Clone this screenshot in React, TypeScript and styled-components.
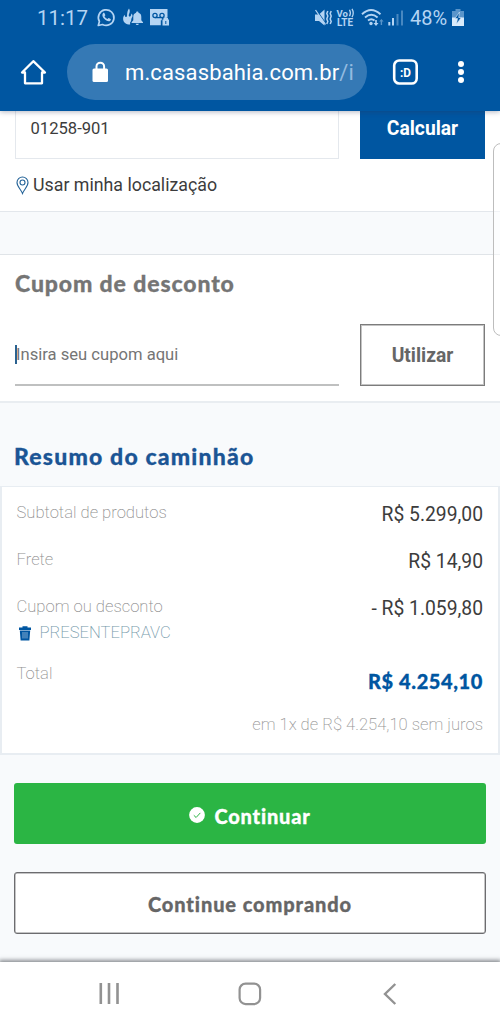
import React from "react";
import styled, { createGlobalStyle } from "styled-components";

const Global = createGlobalStyle`
  * { box-sizing: border-box; }
  body { margin: 0; background: #f8fafc; font-family: Roboto, "Liberation Sans", sans-serif; }
  button { font: inherit; padding: 0; margin: 0; border: 0; background: none; }
`;

const BLUE = "#0056a1";
const PALE = "#b4d4f3";

const Screen = styled.div`
  position: relative;
  display: flex;
  flex-direction: column;
  width: 500px;
  height: 1028px;
  overflow: hidden;
  background: #f8fafc;
`;

const Label = styled.span<{ $size: number; $track?: number; $weight?: number; $color?: string }>`
  font-size: ${(p) => p.$size}px;
  letter-spacing: ${(p) => p.$track ?? 0}px;
  font-weight: ${(p) => p.$weight ?? 400};
  color: ${(p) => p.$color ?? "#3c3c3c"};
  line-height: 24px;
  white-space: nowrap;
`;

const Display = styled(Label)`
  font-family: Lato, "Open Sans", sans-serif;
  font-weight: 900;
  -webkit-text-stroke: 0.3px currentColor;
`;

const Header = styled.header`
  position: relative;
  z-index: 2;
  flex: none;
  height: 111px;
  background: ${BLUE};
  box-shadow: 0 1px 5px rgba(40, 50, 80, 0.35);
`;

const StatusBar = styled.div`
  display: flex;
  align-items: center;
  height: 36px;
  padding: 0 35px 0 37px;
`;

const StatusIcons = styled.div<{ $left: number }>`
  display: flex;
  margin-left: ${(p) => p.$left}px;
`;

const BatteryIcon = styled.svg`
  margin: 2px 0 0 4px;
`;

const Toolbar = styled.div`
  display: flex;
  align-items: center;
  height: 72px;
  padding-left: 20px;
`;

const UrlPill = styled.div`
  display: flex;
  align-items: center;
  width: 300px;
  height: 56px;
  margin: 0 25px 0 20px;
  padding-left: 25px;
  border-radius: 28px;
  background: #3579b5;
`;

const Url = styled(Label)`
  margin: 2px 0 0 16px;
  span { color: #93bbe0; }
`;

const Dots = styled.svg`
  margin-left: 38px;
`;

const Delivery = styled.section`
  flex: none;
  height: 101px;
  padding: 0 15px;
  background: #fff;
  border-bottom: 1px solid #e3e7ec;
`;

const FieldRow = styled.div`
  display: flex;
  justify-content: space-between;
  align-items: flex-start;
`;

const ZipField = styled.div`
  width: 324px;
  height: 48px;
  padding: 6px 14.5px;
  border: 1px solid #e4e8ed;
  border-top: 0;
`;

const Calculate = styled.button`
  width: 125px;
  height: 48px;
  padding-bottom: 12px;
  background: ${BLUE};
`;

const LocationLink = styled.div`
  display: flex;
  align-items: center;
  margin-top: 14px;
  padding-left: 1px;
  gap: 4px;
`;

const Coupon = styled.section`
  flex: none;
  height: 149px;
  margin-top: 42px;
  padding: 16px 15px 0;
  background: #fff;
  border-top: 1px solid #e0e4e8;
  border-bottom: 2px solid #e9edf1;
`;

const Heading = styled(Display).attrs({ as: "h2" })`
  margin: 0;
`;

const CouponRow = styled(FieldRow)`
  margin-top: 29px;
`;

const CouponField = styled.div`
  display: flex;
  align-items: center;
  width: 324px;
  height: 62px;
  padding-top: 1px;
  border-bottom: 2px solid #bfc0c0;
`;

const Caret = styled.i`
  width: 2px;
  height: 19px;
  margin-right: -1px;
  background: #2b6290;
`;

const Apply = styled.button`
  width: 125px;
  height: 62px;
  padding-top: 1px;
  border: 1px solid #7c7c7c;
  box-shadow: inset 0 0 0 1px #c4c4c4;
`;

const SummaryTitle = styled.div`
  flex: none;
  height: 83px;
  padding: 41px 14px 0;
`;

const Card = styled.section`
  flex: none;
  height: 269px;
  padding: 14px 15px 0 14.5px;
  background: #fff;
  border: solid #e8edf2;
  border-width: 1px 2px 2px 2px;
`;

const Line = styled.div<{ $height: number }>`
  display: flex;
  justify-content: space-between;
  height: ${(p) => p.$height}px;
`;

const Voucher = styled.div`
  display: flex;
  align-items: center;
  gap: 9px;
  padding-left: 2px;
  height: 28px;
`;

const Amount = styled.div<{ $top: number }>`
  padding-top: ${(p) => p.$top}px;
`;

const Installments = styled.div`
  text-align: right;
  padding-top: 3px;
`;

const Actions = styled.div`
  display: flex;
  flex: none;
  flex-direction: column;
  gap: 28px;
  height: 207px;
  padding: 28px 14px 0;
`;

const ActionButton = styled.button<{ $primary?: boolean }>`
  display: flex;
  flex: none;
  align-items: center;
  justify-content: center;
  gap: 9px;
  height: 61.4px;
  padding-top: ${(p) => (p.$primary ? 4 : 1)}px;
  border-radius: 3px;
  background: ${(p) => (p.$primary ? "#2bb544" : "#fff")};
  border: ${(p) => (p.$primary ? "0" : "1px solid #6c6c6f")};
  box-shadow: ${(p) => (p.$primary ? "none" : "inset 0 0 0 0.5px #8a8a8c")};
`;

const NavBar = styled.nav`
  position: relative;
  display: flex;
  flex: 1;
  align-items: center;
  justify-content: space-between;
  padding: 0 103px 3px 98px;
  background: #fff;
  box-shadow: 0 -1px 4px 1px rgba(80, 85, 90, 0.65);
`;

const HomeKey = styled.svg`
  margin-right: 4px;
`;

const EdgeHandle = styled.div`
  position: absolute;
  z-index: 3;
  left: 493px;
  top: 143px;
  width: 20px;
  height: 193px;
  border: 1px solid #bdbdbd;
  border-radius: 8px;
  background: rgba(255, 255, 255, 0.5);
`;

const LeftStatus = () => (
  <svg width="74" height="24" viewBox="96 6 74 24" fill={PALE}>
    <path d="M98.3 25.5l1.1-4a7.8 7.8 0 1 1 3.1 3z" fill="none" stroke={PALE} strokeWidth="1.7" strokeLinejoin="round" />
    <path d="M103 13.2c.5-.6 1.2-.5 1.5 0l.8 1.7c.1.6-.5 1-.8 1.4.7 1.4 1.6 2.200 3 2.800.5-.4.8-1.100 1.300-1.100l1.800.9c.5.3.2 1.300-.3 1.800-2.600 2.200-8.900-3.200-7.800-6.500z" />
    <path d="M129 8.500c2 3.500-.5 5.200-.2 7.200.3 1.300 1.900 1.100 2.200-.5l.5-1.700c1 1 1.200 2 .9 3.200-1 1.200-1.200 2.800-1.300 4.400l-1 1.400v2c-4 0-7-2.200-7-5.800 0-1.800.8-3 1.500-4 .2 1.600.8 2.300 1.600 2.300 1.800 0-.2-4.300 2.800-8.500z" />
    <path d="M137.300 11.500c.8 0 1.200.5 1.200 1.200 2.200.7 2.800 2.200 2.800 4.300v3.300l1.700 2v.8h-11.400v-.8l1.700-2v-3.300c0-2.100.7-3.600 2.800-4.300 0-.7.4-1.200 1.200-1.200zM135.700 23.800h3.200c-.2 1.600-3 1.600-3.200 0z" />
    <path d="M150 9h17.500v8h-3.300c-2.200 0-2.700 2-2.400 3.200h-1v5H150z" />
    <g fill="none" stroke={BLUE} strokeWidth="1.300"><circle cx="155" cy="15.500" r="2.100" /><circle cx="162" cy="15.500" r="2.100" /><path d="M155 17.600h7" /></g>
    <path d="M162.500 19.500h6.500v6h-6.500zM163.500 19.500v-1.400q2.200-2 4.500 0v1.400" />
    <path d="M165.800 21v3" stroke={BLUE} />
  </svg>
);

const SoundSignal = () => (
  <svg width="90" height="26" viewBox="314 5 90 26" fill={PALE}>
    <path d="M315 14.500h4l5.500-5v16L319 21h-4z" />
    <path d="M315.500 8.500l9.500 14" stroke={BLUE} strokeWidth="1.200" />
    <path d="M315.500 10l10 14.500" stroke={PALE} strokeWidth="1.300" />
    <path d="M327.800 11l-1 2.500 1 2.500-1 3 1 2.500-1 2.500M331.200 11l-1 2.500 1 2.500-1 3 1 2.500-1 2.500" fill="none" stroke={PALE} strokeWidth="1.500" />
    <g fontFamily="Roboto" fontWeight="700">
      <text x="336.500" y="16.500" fontSize="9.500">Vo</text>
      <text x="337" y="26" fontSize="10" textLength="16" lengthAdjust="spacingAndGlyphs">LTE</text>
    </g>
    <g fill="none" stroke={PALE} strokeWidth="1.300"><path d="M349.500 9.800q1.800 3.200 0 6.500M352 8.800q2.500 4.200 0 8.400" /></g>
    <g fill="none" stroke={PALE} strokeWidth="1.900"><path d="M362 14.200q9-8.500 18.500 0M365 17.500q6.300-5.500 12.600 0M368 20.500q3.400-2.700 6.500 0" /></g>
    <circle cx="371" cy="23.500" r="1.700" />
    <path d="M375.200 20h1.600v3h1.700l-2.500 3-2.500-3h1.700z" />
    <path d="M380.700 25h1.400v-3.500h1.500l-2.200-2.500-2.200 2.500h1.500z" opacity=".5" />
    <path d="M388.300 22h2v3.500h-2zM392 18h2v7.500h-2z" />
    <path d="M396.500 14h2V25.500h-2zM401 10.500h2v15h-2z" opacity=".4" />
  </svg>
);

const Battery = () => (
  <BatteryIcon width="14" height="20" viewBox="451 7 14 20">
    <path d="M455.500 8h5v2h3.500v7h-12v-7h3.500z" fill={PALE} opacity=".5" />
    <path d="M452 16.500h12v8.500h-12z" fill="#d9ebfb" />
    <path d="M459.500 11l-4.500 6.500h2.500l-1 5.500 4.800-6.500h-2.600z" fill={BLUE} stroke="#d9ebfb" strokeWidth=".6" />
  </BatteryIcon>
);

const Home = () => (
  <svg width="27" height="28" viewBox="20 58 27 28" fill="none" stroke="#fff" strokeWidth="2.300" strokeLinejoin="round">
    <path d="M33.300 61.200L22 72.500h3V83.300h17V72.500h3z" />
  </svg>
);

const Lock = () => (
  <svg width="17" height="22" viewBox="0 0 17 22">
    <path d="M4.500 8V5.500a3.800 3.800 0 0 1 7.600 0V8" fill="none" stroke="#fff" strokeWidth="2" />
    <rect x=".5" y="7.500" width="15.500" height="13.500" rx="1.500" fill="#fff" />
  </svg>
);

const Tabs = () => (
  <svg width="27" height="28" viewBox="0 0 27 28">
    <rect x="2.200" y="2.500" width="22.500" height="23" rx="5" fill="none" stroke="#fff" strokeWidth="2.600" />
    <text x="8" y="18.500" fill="#fff" fontFamily="Roboto" fontWeight="700" fontSize="12.500" textLength="11" lengthAdjust="spacingAndGlyphs">:D</text>
  </svg>
);

const Pin = () => (
  <svg width="13" height="19" viewBox="0 0 13 19" fill="none" stroke="#246398" strokeWidth="1.100">
    <path d="M6.500 17.500C5 13.500 1 10.500 1 6.500a5.500 5.500 0 0 1 11 0c0 4-4 7-5.500 11z" />
    <circle cx="6.500" cy="6.500" r="2.500" />
  </svg>
);

const Trash = () => (
  <svg width="12" height="15" viewBox="0 0 12 15" fill={BLUE}>
    <path d="M0 1.500h3.500V.3h5v1.200H12V4H0zM.8 4.600h10.400L10.400 14.600H1.600z" />
    <path d="M4 6v6.500M6 6v6.500M8 6v6.500" stroke="#a5c4df" strokeWidth=".8" />
  </svg>
);

const CheckBadge = () => (
  <svg width="16" height="17" viewBox="0 0 16 17">
    <circle cx="8" cy="8" r="7.900" fill="#fff" />
    <path d="M4.800 8.300l2.300 2.200 4.200-4.600" fill="none" stroke="#2bb544" strokeWidth="1" />
  </svg>
);

export default function App() {
  return (
    <Screen>
      <Global />
      <Header>
        <StatusBar>
          <Label $size={20.5} $color={PALE} $track={0}>11:17</Label>
          <StatusIcons $left={8}><LeftStatus /></StatusIcons>
          <StatusIcons $left={144}><SoundSignal /></StatusIcons>
          <StatusIcons $left={6}><Label $size={20} $color={PALE}>48%</Label><Battery /></StatusIcons>
        </StatusBar>
        <Toolbar>
          <Home />
          <UrlPill>
            <Lock />
            <Url $size={22} $color="#fff" $track={0.13}>m.casasbahia.com.br<span>/i</span></Url>
          </UrlPill>
          <Tabs />
          <Dots width="8" height="24" viewBox="0 0 8 24" fill="#fff">
            <circle cx="4" cy="4" r="3" /><circle cx="4" cy="12" r="3" /><circle cx="4" cy="20" r="3" />
          </Dots>
        </Toolbar>
      </Header>

      <Delivery>
        <FieldRow>
          <ZipField><Label $size={16.6}>01258-901</Label></ZipField>
          <Calculate><Label $size={19.3} $weight={700} $color="#fff">Calcular</Label></Calculate>
        </FieldRow>
        <LocationLink><Pin /><Label $size={17.8}>Usar minha localização</Label></LocationLink>
      </Delivery>

      <Coupon>
        <Heading $size={23} $track={0.88} $color="#757575">Cupom de desconto</Heading>
        <CouponRow>
          <CouponField><Caret /><Label $size={16.6} $color="#757575">Insira seu cupom aqui</Label></CouponField>
          <Apply><Label $size={19.3} $weight={700} $color="#666">Utilizar</Label></Apply>
        </CouponRow>
      </Coupon>

      <SummaryTitle>
        <Heading $size={23} $track={1.18} $color="#1b5595">Resumo do caminhão</Heading>
      </SummaryTitle>

      <Card>
        <Line $height={47}>
          <Label $size={16.6} $weight={200} $color="#8f8f8f">Subtotal de produtos</Label>
          <Amount $top={1.5}><Label $size={19.3}>R$ 5.299,00</Label></Amount>
        </Line>
        <Line $height={47}>
          <Label $size={16.6} $weight={200} $color="#8f8f8f">Frete</Label>
          <Amount $top={2}><Label $size={19.3}>R$ 14,90</Label></Amount>
        </Line>
        <Line $height={67}>
          <div>
            <Label $size={16.6} $weight={200} $color="#8f8f8f">Cupom ou desconto</Label>
            <Voucher><Trash /><Label $size={16.6} $weight={200} $color="#7599aa">PRESENTEPRAVC</Label></Voucher>
          </div>
          <Amount $top={2}><Label $size={19.3}>- R$ 1.059,80</Label></Amount>
        </Line>
        <Line $height={48}>
          <Label $size={16.6} $weight={200} $color="#8f8f8f">Total</Label>
          <Amount $top={7}><Display $size={20} $track={0.6} $color={BLUE}>R$ 4.254,10</Display></Amount>
        </Line>
        <Installments><Label $size={16.6} $weight={200} $color="#989898">em 1x de R$ 4.254,10 sem juros</Label></Installments>
      </Card>

      <Actions>
        <ActionButton $primary>
          <CheckBadge /><Display $size={20} $track={0.8} $color="#fff">Continuar</Display>
        </ActionButton>
        <ActionButton>
          <Display $size={20} $track={0.9} $color="#666">Continue comprando</Display>
        </ActionButton>
      </Actions>

      <NavBar>
        <svg width="22" height="22" viewBox="0 0 22 22" stroke="#929292" strokeWidth="2.600">
          <path d="M2.800 0v21M11 0v21M19.500 0v21" />
        </svg>
        <HomeKey width="24" height="24" viewBox="0 0 24 24" fill="none" stroke="#929292" strokeWidth="2.200">
          <rect x="1.600" y="1.600" width="20.500" height="20.500" rx="6" />
        </HomeKey>
        <svg width="14" height="22" viewBox="0 0 14 22" fill="none" stroke="#929292" strokeWidth="2.400">
          <path d="M12.300 1L2 11l10.300 10" />
        </svg>
      </NavBar>
      <EdgeHandle />
    </Screen>
  );
}
